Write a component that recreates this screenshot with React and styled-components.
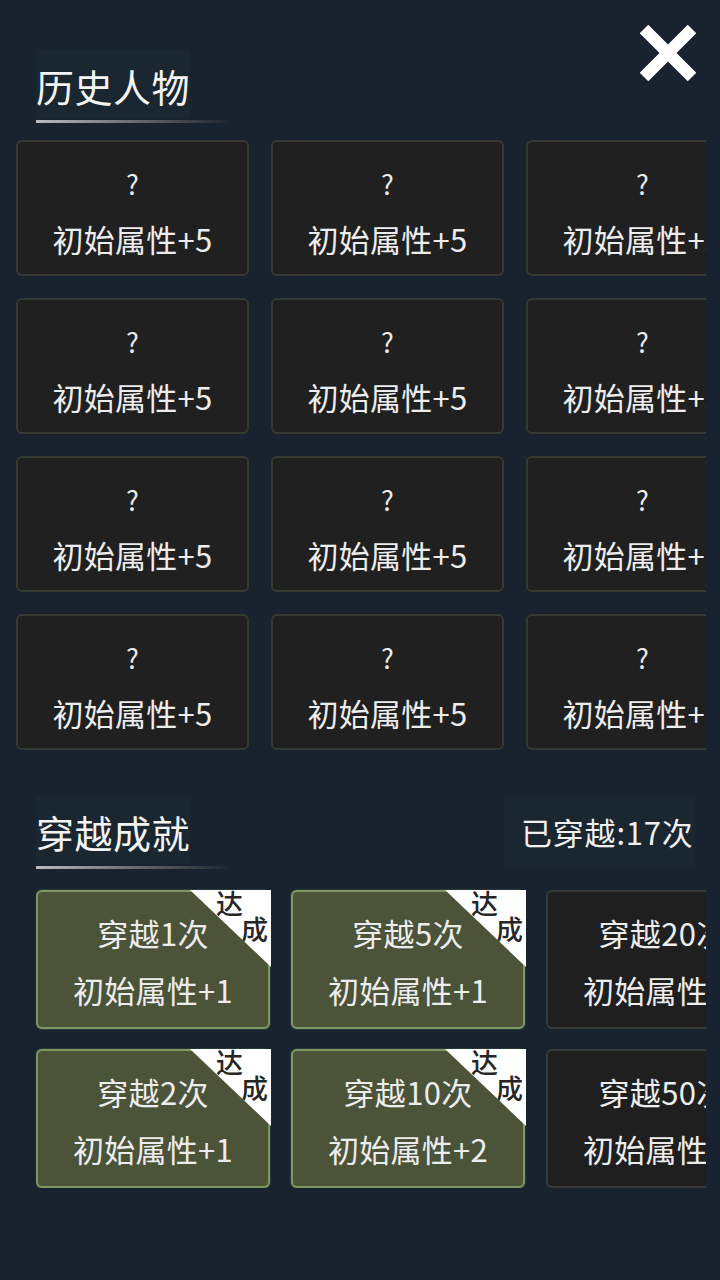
import styled, { createGlobalStyle } from "styled-components";

const GlobalStyle = createGlobalStyle`
  html, body {
    margin: 0;
    padding: 0;
    background: #19222f;
  }
  body {
    font-family: "Noto Sans CJK SC", "Noto Sans", sans-serif;
    color: #ececec;
  }
`;

const history = Array.from({ length: 12 }, () => ({ name: "?", bonus: "初始属性+5" }));

const achievements = [
  { name: "穿越1次", bonus: "初始属性+1", done: true },
  { name: "穿越5次", bonus: "初始属性+1", done: true },
  { name: "穿越20次", bonus: "初始属性+1", done: false },
  { name: "穿越2次", bonus: "初始属性+1", done: true },
  { name: "穿越10次", bonus: "初始属性+2", done: true },
  { name: "穿越50次", bonus: "初始属性+2", done: false },
];

const CloseIcon = () => (
  <svg width="56" height="56" viewBox="0 0 56 56">
    <line x1="4" y1="4" x2="52" y2="52" stroke="#fff" strokeWidth="12" />
    <line x1="52" y1="4" x2="4" y2="52" stroke="#fff" strokeWidth="12" />
  </svg>
);

const App = () => {
  return (
    <>
      <GlobalStyle />
      <Page>
        <TopRow>
          <SectionHeader $top={50}>
            <TitleBox>历史人物</TitleBox>
            <Underline />
          </SectionHeader>
          <CloseButton>
            <CloseIcon />
          </CloseButton>
        </TopRow>

        <HistoryGrid>
          {history.map((h, i) => (
            <HistoryCard key={i}>
              <Mark>{h.name}</Mark>
              <Line>{h.bonus}</Line>
            </HistoryCard>
          ))}
        </HistoryGrid>

        <AchieveRow>
          <SectionHeader $top={0}>
            <TitleBox>穿越成就</TitleBox>
            <Underline />
          </SectionHeader>
          <CountBox>已穿越:17次</CountBox>
        </AchieveRow>

        <AchieveGrid>
          {achievements.map((a, i) => (
            <AchieveCard key={i} $done={a.done}>
              {a.done && (
                <Badge>
                  <BadgeChar $shift={25}>达</BadgeChar>
                  <BadgeChar $shift={0}>成</BadgeChar>
                </Badge>
              )}
              <Line>{a.name}</Line>
              <Line>{a.bonus}</Line>
            </AchieveCard>
          ))}
        </AchieveGrid>
      </Page>
    </>
  );
};

export default App;

// styled-components
const Page = styled.div`
  width: 720px;
  height: 1280px;
  overflow: hidden;
  display: flex;
  flex-direction: column;
`;

const TopRow = styled.div`
  display: flex;
  justify-content: space-between;
  align-items: flex-start;
  padding: 0 24px 0 36px;
`;

const SectionHeader = styled.div`
  display: flex;
  flex-direction: column;
  margin-top: ${(p) => p.$top}px;
`;

const TitleBox = styled.div`
  align-self: flex-start;
  background: #1a2730;
  font-size: 38px;
  line-height: 72px;
  height: 68px;
  color: #f4f4f4;
  letter-spacing: 0.5px;
`;

const Underline = styled.div`
  width: 192px;
  height: 3px;
  margin-top: 2px;
  background: linear-gradient(90deg, #b8bcc0 0%, #6a6e72 50%, rgba(40, 44, 48, 0.4) 100%);
`;

const CloseButton = styled.div`
  margin-top: 25px;
  width: 56px;
  height: 56px;
  display: flex;
`;

const HistoryGrid = styled.div`
  margin: 17px 0 0 16px;
  width: 690px;
  overflow: hidden;
  display: grid;
  grid-template-columns: repeat(3, 233px);
  grid-auto-rows: 136px;
  column-gap: 22px;
  row-gap: 22px;
`;

const HistoryCard = styled.div`
  box-sizing: border-box;
  background: #202020;
  border: 2px solid #363b32;
  border-radius: 6px;
  display: flex;
  flex-direction: column;
  align-items: center;
  padding-top: 22px;
  gap: 15px;
`;

const Mark = styled.div`
  font-size: 27px;
  line-height: 40px;
  height: 40px;
  color: #ececec;
`;

const Line = styled.div`
  font-size: 31px;
  line-height: 40px;
  height: 40px;
  white-space: nowrap;
  letter-spacing: 0.3px;
  color: #ededed;
`;

const AchieveRow = styled.div`
  margin-top: 46px;
  display: flex;
  justify-content: space-between;
  align-items: flex-start;
  padding: 0 25px 0 36px;
`;

const CountBox = styled.div`
  width: 191px;
  height: 72px;
  box-sizing: border-box;
  padding-left: 17px;
  background: #1a2630;
  font-size: 31px;
  line-height: 72px;
  letter-spacing: 0.8px;
  white-space: nowrap;
  color: #f0f0f0;
`;

const AchieveGrid = styled.div`
  margin: 19px 0 0 36px;
  width: 670px;
  overflow: hidden;
  display: grid;
  grid-template-columns: repeat(3, 234px);
  grid-auto-rows: 139px;
  column-gap: 21px;
  row-gap: 20px;
  padding-top: 2px;
`;

const AchieveCard = styled.div`
  position: relative;
  box-sizing: border-box;
  background: ${(p) => (p.$done ? "#4b5339" : "#1f1f1f")};
  border: 2px solid ${(p) => (p.$done ? "#7d9961" : "#383a36")};
  box-shadow: ${(p) => (p.$done ? "0 0 2px rgba(120, 170, 90, 0.6)" : "none")};
  border-radius: 6px;
  display: flex;
  flex-direction: column;
  align-items: center;
  padding-top: 21px;
  gap: 17px;
`;

const Badge = styled.div`
  position: absolute;
  top: -2px;
  right: -3px;
  width: 81px;
  height: 77px;
  background: #ffffff;
  clip-path: polygon(0 0, 100% 0, 100% 100%);
  display: flex;
  flex-direction: column;
  align-items: flex-end;
  padding-right: 3px;
  box-sizing: border-box;
`;

const BadgeChar = styled.span`
  font-size: 27px;
  line-height: 26px;
  font-weight: 500;
  color: #262626;
  margin-right: ${(p) => p.$shift}px;
`;
